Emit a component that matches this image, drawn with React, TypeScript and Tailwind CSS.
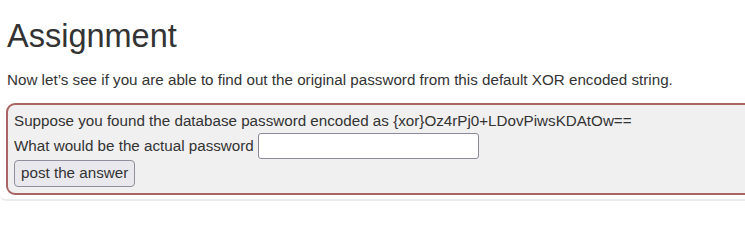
import React from "react";

export default function App() {
  return (
    <div className="w-[745px] h-[202px] overflow-hidden bg-white" style={{ fontFamily: '"Liberation Sans", Arial, sans-serif' }}>
      <div className="w-[760px] bg-white border-b-2 border-[#ececec] rounded-bl-[6px] pb-[4px]">
        <div className="pl-[7px]">
          <h2 className="text-[32.5px] leading-none text-[#333333] pt-[20px] pb-0 m-0">Assignment</h2>
          <p className="text-[15.2px] leading-[20px] text-[#333333] mt-[17px]">
            Now let’s see if you are able to find out the original password from this default XOR encoded string.
          </p>
        </div>
        <div className="ml-[6px] mt-[13px] w-[760px] border-2 border-[#ab6464] rounded-[9px] bg-[#f0f0f0] pl-[6px] pt-[6px] pb-[6px] text-[15.2px] text-[#333333]">
          <div className="leading-[20px]">Suppose you found the database password encoded as {"{xor}"}Oz4rPj0+LDovPiwsKDAtOw==</div>
          <div className="flex items-center mt-[2px] leading-[20px]">
            <span>What would be the actual password</span>
            <input
              type="text"
              className="ml-[4px] w-[221px] h-[26px] bg-white border border-[#8a8a9a] rounded-[3px] outline-none"
            />
          </div>
          <button className="mt-[1px] h-[27px] px-[6px] bg-[#e9e9ed] border border-[#8f8f9d] rounded-[4px] text-[15.2px] text-[#333333] leading-[20px]" style={{ fontFamily: '"Liberation Sans", Arial, sans-serif' }}>
            post the answer
          </button>
        </div>
      </div>
    </div>
  );
}
